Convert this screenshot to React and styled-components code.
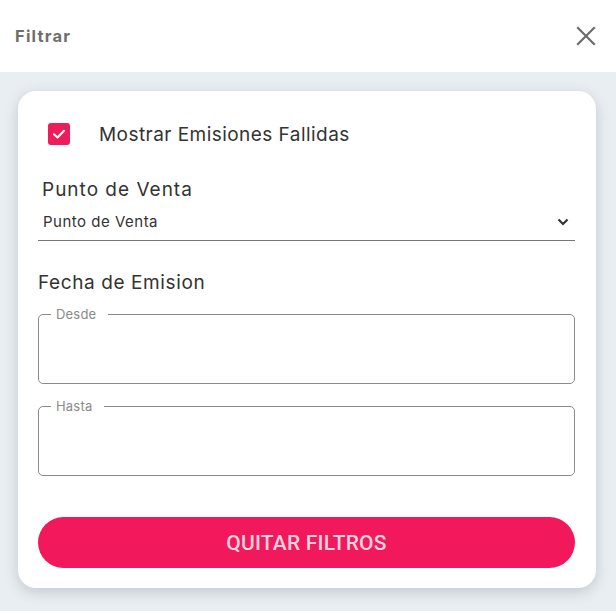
import React from "react";
import styled, { createGlobalStyle } from "styled-components";

const Global = createGlobalStyle`
  html, body { margin: 0; padding: 0; background: #e9eef2; }
  body { font-family: Inter, Roboto, "Noto Sans", sans-serif; color: #333; }
  * { box-sizing: border-box; }
`;

const Page = styled.div`
  width: 616px;
  min-height: 611px;
  display: flex;
  flex-direction: column;
  background: #e9eef2;
`;

const Header = styled.header`
  height: 72px;
  background: #fff;
  display: flex;
  align-items: center;
  justify-content: space-between;
  padding: 0 18px 0 15px;
`;

const Title = styled.h1`
  margin: 0;
  font-family: Inter, Roboto, sans-serif;
  font-size: 16.5px;
  font-weight: 700;
  color: #6e6e6e;
  letter-spacing: 1.2px;
`;

const CloseButton = styled.button`
  border: none;
  background: none;
  padding: 0;
  width: 24px;
  height: 24px;
  display: flex;
  align-items: center;
  justify-content: center;
  cursor: pointer;
`;

const Body = styled.main`
  padding: 19px 20px 23px 18px;
`;

const Card = styled.section`
  background: #fff;
  border-radius: 18px;
  box-shadow: 0 4px 14px rgba(60, 70, 80, 0.22);
  padding: 32px 21px 20px 20px;
  display: flex;
  flex-direction: column;
`;

const CheckRow = styled.label`
  display: flex;
  align-items: center;
  gap: 29px;
  padding-left: 10px;
  height: 22px;
  font-size: 19px;
  letter-spacing: 0.45px;
  color: #333;
`;

const CheckBox = styled.span`
  width: 22px;
  height: 22px;
  border-radius: 3px;
  background: #ef1c5c;
  display: flex;
  align-items: center;
  justify-content: center;
`;

const SectionLabel = styled.div`
  font-size: 19px;
  line-height: 22px;
  letter-spacing: ${(p) => p.$spacing}px;
  color: #333;
  margin-top: ${(p) => p.$top}px;
  padding-left: ${(p) => p.$indent || 0}px;
`;

const Select = styled.div`
  margin-top: 11px;
  display: flex;
  align-items: center;
  justify-content: space-between;
  padding: 0 6px 8px 5px;
  border-bottom: 1px solid #777;
  font-size: 15px;
  letter-spacing: 0.5px;
  line-height: 20px;
  color: #333;
`;

const Field = styled.fieldset`
  margin: ${(p) => p.$top}px 0 0 0;
  height: 77px;
  border: 1px solid #8a8a8a;
  border-radius: 5px;
  padding: 0 12px;
`;

const Legend = styled.legend`
  font-size: 13px;
  line-height: 15px;
  color: #8a8a8a;
  letter-spacing: 0.2px;
  padding: 0 12px 0 5px;
`;

const Button = styled.button`
  margin-top: 41px;
  height: 51px;
  border: none;
  border-radius: 26px;
  background: #f2185c;
  color: #fcd3df;
  font-family: Roboto, "Noto Sans", sans-serif;
  font-size: 21px;
  font-weight: 500;
  letter-spacing: 0.2px;
  cursor: pointer;
`;

export default function App() {
  return (
    <Page>
      <Global />
      <Header>
        <Title>Filtrar</Title>
        <CloseButton aria-label="Cerrar">
          <svg width="20" height="20" viewBox="0 0 20 20">
            <path d="M2 2 L18 18 M18 2 L2 18" stroke="#6b6b6b" strokeWidth="2.2" strokeLinecap="square" fill="none" />
          </svg>
        </CloseButton>
      </Header>
      <Body>
        <Card>
          <CheckRow>
            <CheckBox>
              <svg width="16" height="16" viewBox="0 0 16 16">
                <path d="M3 8.3 L6.5 11.5 L13 4.8" stroke="#fff" strokeWidth="2.2" fill="none" strokeLinecap="round" strokeLinejoin="round" />
              </svg>
            </CheckBox>
            Mostrar Emisiones Fallidas
          </CheckRow>
          <SectionLabel $top={34} $indent={4} $spacing={1}>Punto de Venta</SectionLabel>
          <Select>
            <span>Punto de Venta</span>
            <svg width="12" height="8" viewBox="0 0 12 8">
              <path d="M1.5 1.5 L6 6 L10.5 1.5" stroke="#333" strokeWidth="2.2" fill="none" />
            </svg>
          </Select>
          <SectionLabel $top={31} $spacing={0.6}>Fecha de Emision</SectionLabel>
          <Field $top={13}>
            <Legend>Desde</Legend>
          </Field>
          <Field $top={15}>
            <Legend>Hasta</Legend>
          </Field>
          <Button>QUITAR FILTROS</Button>
        </Card>
      </Body>
    </Page>
  );
}
